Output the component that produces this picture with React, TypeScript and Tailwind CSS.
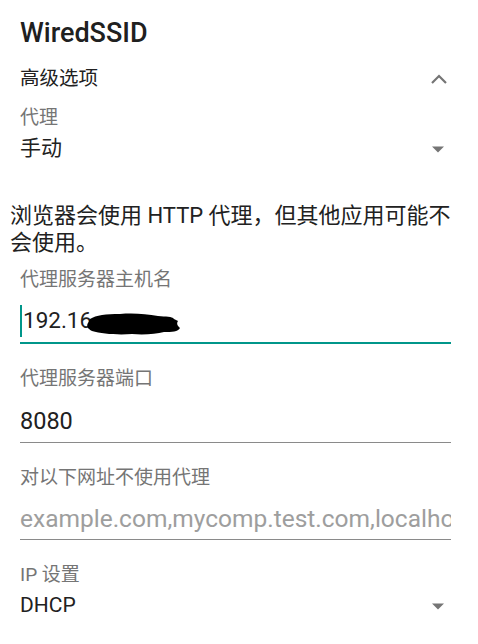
import React from "react";

const font = { fontFamily: "Roboto, 'Noto Sans CJK SC', sans-serif" };

function DropArrow() {
  return (
    <svg width="12" height="7" viewBox="0 0 12 7" className="shrink-0">
      <path d="M0 0.5 L12 0.5 L6 6.5 Z" fill="#757575" />
    </svg>
  );
}

function Label({ children, className = "" }: { children: React.ReactNode; className?: string }) {
  return <div className={`h-[26px] flex items-center text-[19px] text-[#757575] ${className}`}>{children}</div>;
}

function Select({ value, className = "" }: { value: string; className?: string }) {
  return (
    <div className={`h-[26px] flex items-center justify-between pr-[7px] ${className}`}>
      <span className="text-[21px] text-[#212121]">{value}</span>
      <DropArrow />
    </div>
  );
}

export default function App() {
  return (
    <div style={font} className="w-[478px] h-[644px] bg-white overflow-hidden pt-[14px] pl-[20px] pr-[27px]">
      <div className="h-[38px] flex items-center text-[27px] font-medium text-[#202020]">WiredSSID</div>

      <div className="mt-[8px] h-[38px] flex items-center justify-between pr-[4px]">
        <span className="text-[19.5px] text-[#212121]">高级选项</span>
        <svg width="16" height="10" viewBox="0 0 16 10">
          <path d="M1 9 L8 2 L15 9" fill="none" stroke="#757575" strokeWidth="2.2" />
        </svg>
      </div>

      <Label className="mt-[7px]">代理</Label>
      <Select value="手动" className="mt-[5px]" />

      <p className="-ml-[10px] -mr-[7px] mt-[40px] text-[22px] leading-[27px] text-[#212121]">
        浏览器会使用 HTTP 代理，但其他应用可能不会使用。
      </p>

      <Label className="mt-[11px]">代理服务器主机名</Label>
      <div className="mt-[7px] relative h-[44px] border-b-2 border-[#00968a] flex items-center">
        <span className="w-[2px] h-[32px] bg-[#00968a] mr-[1px]" />
        <span className="text-[22.5px] text-[#212121]">192.16</span>
        <svg className="absolute left-[66px] top-[10px]" width="96" height="26" viewBox="0 0 96 26">
          <path
            d="M4 9 C10 5 20 4 34 4 C48 3 60 4 72 6 C80 7 86 6 88 9 L92 11 C90 14 92 16 94 18 C92 22 86 22 78 22 C70 24 58 25 46 24 C32 25 16 24 6 21 C2 19 0 16 2 13 Z"
            fill="#000"
          />
        </svg>
      </div>

      <Label className="mt-[22px]">代理服务器端口</Label>
      <div className="mt-[10px] h-[41px] border-b-[1.5px] border-[#8a8a8a] flex items-center">
        <span className="text-[23.5px] text-[#212121]">8080</span>
      </div>

      <Label className="mt-[22px]">对以下网址不使用代理</Label>
      <div className="mt-[9px] h-[40px] border-b-[1.5px] border-[#8a8a8a] flex items-center overflow-hidden whitespace-nowrap">
        <span className="text-[24.5px] text-[#9e9e9e]">example.com,mycomp.test.com,localhost</span>
      </div>

      <Label className="mt-[22px]">IP 设置</Label>
      <Select value="DHCP" className="mt-[5px]" />
    </div>
  );
}
